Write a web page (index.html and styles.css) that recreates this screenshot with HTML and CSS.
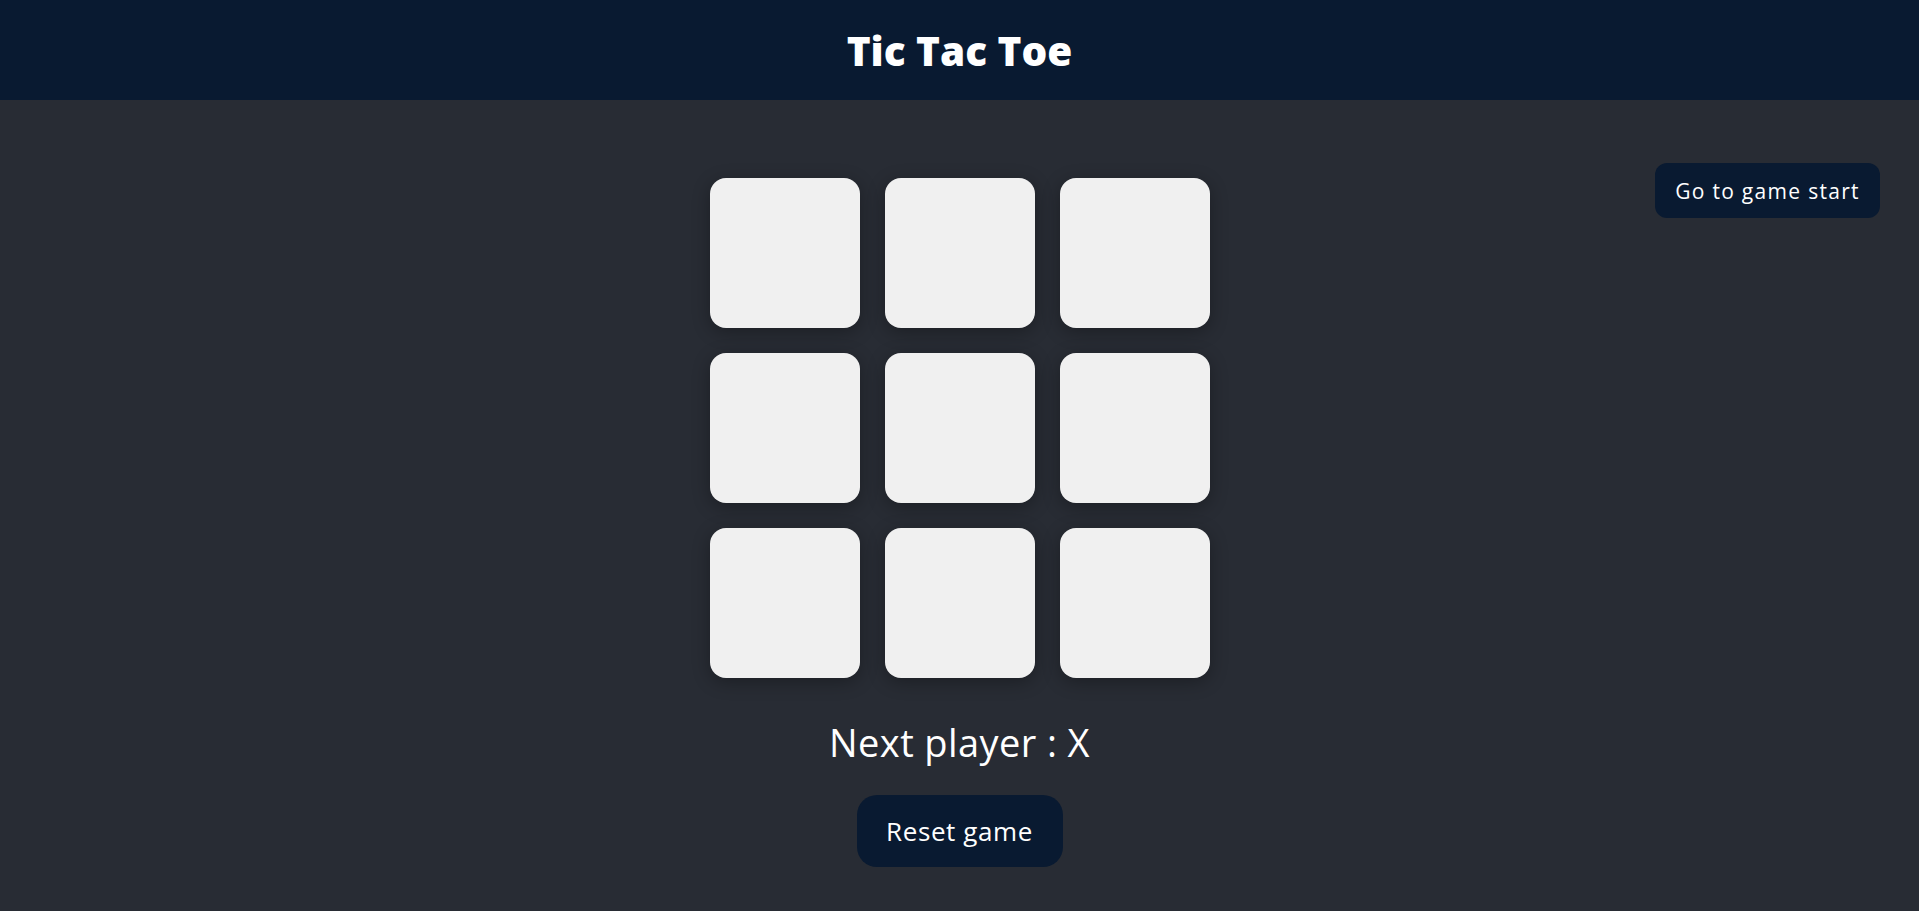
FILE: index.html
```html
<!DOCTYPE html>
<html lang="en">
<head>
<meta charset="utf-8">
<title>Tic Tac Toe</title>
<link rel="stylesheet" href="styles.css">
</head>
<body>
<header class="header">
  <h1 class="title">Tic Tac Toe</h1>
</header>
<main class="main">
  <div class="spacer"></div>
  <section class="game">
    <div class="board">
      <button class="cell"></button>
      <button class="cell"></button>
      <button class="cell"></button>
      <button class="cell"></button>
      <button class="cell"></button>
      <button class="cell"></button>
      <button class="cell"></button>
      <button class="cell"></button>
      <button class="cell"></button>
    </div>
    <p class="status">Next player : X</p>
    <button class="reset">Reset game</button>
  </section>
  <div class="side">
    <button class="goto">Go to game start</button>
  </div>
</main>
</body>
</html>
```
FILE: styles.css
```css
* { box-sizing: border-box; }
html, body { margin: 0; padding: 0; }
body {
  background: #282c34;
  font-family: "Open Sans", "Liberation Sans", sans-serif;
  color: #ffffff;
  min-height: 100vh;
}
.header {
  height: 100px;
  background: #091a31;
  display: flex;
  align-items: center;
  justify-content: center;
}
.title {
  margin: 0;
  font-size: 40.5px;
  font-weight: 800;
  letter-spacing: 0;
  color: #ffffff;
}
.main {
  display: grid;
  grid-template-columns: 1fr auto 1fr;
}
.game {
  display: flex;
  flex-direction: column;
  align-items: center;
  padding-top: 78px;
}
.board {
  display: grid;
  grid-template-columns: repeat(3, 150px);
  grid-auto-rows: 150px;
  gap: 25px;
}
.cell {
  border: none;
  background: #f0f0f0;
  border-radius: 16px;
  box-shadow: 0 4px 18px rgba(0, 0, 0, 0.3);
  padding: 0;
}
.status {
  margin: 40px 0 0;
  font-size: 38px;
  line-height: 1.3;
  font-weight: 400;
  letter-spacing: 0.4px;
}
.reset {
  margin-top: 28px;
  width: 206px;
  height: 72px;
  border: none;
  border-radius: 20px;
  background: #091a31;
  color: #ffffff;
  font-family: inherit;
  font-size: 26px;
  letter-spacing: 0.6px;
}
.side {
  display: flex;
  justify-content: flex-end;
  align-items: flex-start;
  padding: 63px 39px 0 0;
}
.goto {
  width: 225px;
  height: 55px;
  border: none;
  border-radius: 12px;
  background: #091a31;
  color: #ffffff;
  font-family: inherit;
  font-size: 21px;
  letter-spacing: 1.3px;
  padding: 0;
}
```
